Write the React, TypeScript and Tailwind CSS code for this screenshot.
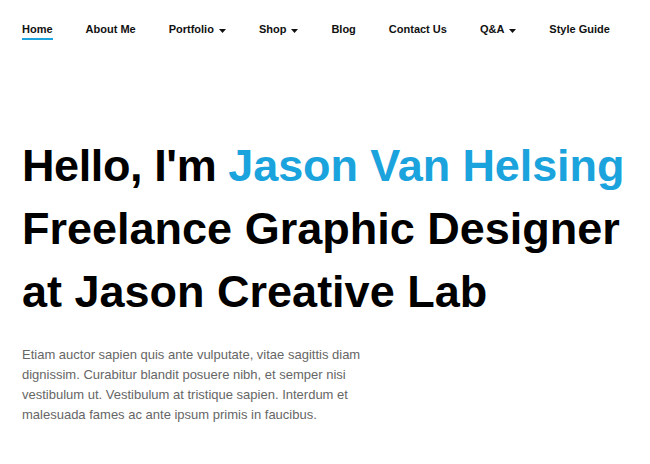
import React from 'react'

const navItems = [
  { label: 'Home', active: true },
  { label: 'About Me' },
  { label: 'Portfolio', caret: true },
  { label: 'Shop', caret: true },
  { label: 'Blog' },
  { label: 'Contact Us' },
  { label: 'Q&A', caret: true },
  { label: 'Style Guide' }
]

function Caret() {
  return (
    <svg width="7" height="4" viewBox="0 0 7 4" className="ml-[5px] mt-[2px]">
      <path d="M0 0 H7 L3.5 4 Z" fill="#111" />
    </svg>
  )
}

export default function App() {
  return (
    <div className="min-h-[464px] w-[650px] bg-white font-['Liberation_Sans',Arial,sans-serif]">
      <nav className="flex items-start gap-[33px] pl-[22px] pt-[23px]">
        {navItems.map((item) => (
          <a
            key={item.label}
            href="#"
            className={
              'flex items-center text-[11px] font-bold leading-[13px] text-[#111] ' +
              (item.active ? 'border-b-2 border-[#1aa3dc] pb-[2px]' : '')
            }
          >
            {item.label}
            {item.caret && <Caret />}
          </a>
        ))}
      </nav>

      <section className="pl-[22px] pt-[94px]">
        <h1 className="text-[45px] font-bold leading-[63px] text-black">
          <span className="tracking-[-0.4px]">Hello, I'm </span>
          <span className="tracking-[-0.1px] text-[#1aa3dc]">Jason Van Helsing</span>
          <br />
          Freelance Graphic Designer
          <br />
          at Jason Creative Lab
        </h1>
        <p className="mt-[22px] w-[365px] text-[13px] leading-[20px] text-[#666]">
          Etiam auctor sapien quis ante vulputate, vitae sagittis diam dignissim. Curabitur
          blandit posuere nibh, et semper nisi vestibulum ut. Vestibulum at tristique sapien.
          Interdum et malesuada fames ac ante ipsum primis in faucibus.
        </p>
      </section>
    </div>
  )
}
